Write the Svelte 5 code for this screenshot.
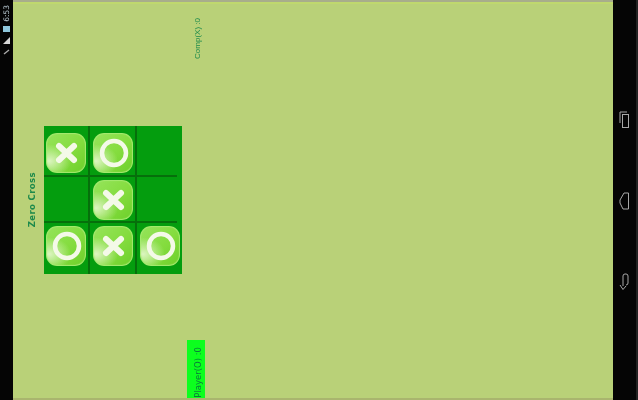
<script>
  const cells = ['x', 'o', '', '', 'x', '', 'o', 'x', 'o'];
</script>

<div class="screen">
  <aside class="status">
    <span class="clock">6:53</span>
    <span class="battery"></span>
    <svg width="9" height="9" viewBox="0 0 9 9"><path d="M1 8 L8 8 L8 1 Z" fill="#d8d8d8" /></svg>
    <svg width="7" height="6" viewBox="0 0 7 6"><path d="M1 5 L6 1" stroke="#aaa" stroke-width="1.5" /></svg>
  </aside>

  <main class="app">
    <div class="title-col"><span class="title">Zero Cross</span></div>
    <div class="board">
      {#each cells as c}
        <div class="cell">
          {#if c}
            <div class="tile">
              <svg viewBox="0 0 40 40" width="40" height="40">
                {#if c === 'x'}
                  <path d="M13 13 L28 27 M28 13 L13 27" stroke="#f4f9e8" stroke-width="6" stroke-linecap="round" fill="none" />
                {:else}
                  <circle cx="21" cy="20" r="12" stroke="#f4f9e8" stroke-width="4.5" fill="none" />
                {/if}
              </svg>
            </div>
          {/if}
        </div>
      {/each}
    </div>
    <div class="score-col">
      <span class="score comp">Comp(X) :0</span>
      <div class="player"><span class="score">Player(O) :0</span></div>
    </div>
  </main>

  <nav class="keys">
    <svg width="11" height="18" viewBox="0 0 11 18" fill="none" stroke="#a8a8a8" stroke-width="1">
      <path d="M1 12 V1 H8" /><rect x="3.5" y="3.5" width="6" height="13" />
    </svg>
    <svg width="11" height="18" viewBox="0 0 11 18" fill="none" stroke="#a8a8a8" stroke-width="1">
      <path d="M9.5 1 H5 L1 8 V11 L4 17 H9.5 Z" />
    </svg>
    <svg width="11" height="18" viewBox="0 0 11 18" fill="none" stroke="#a8a8a8" stroke-width="1">
      <path d="M4 13 V3 Q4 1 6 1 H7 Q9 1 9 3 V10 Q9 12 7 12" /><path d="M1 12 L4 16.5 L7 13" />
    </svg>
  </nav>
</div>

<style>
  :global(body) {
    margin: 0;
    background: #000;
  }
  .screen {
    display: flex;
    width: 638px;
    height: 400px;
    overflow: hidden;
    font-family: "DejaVu Sans", sans-serif;
  }
  .status {
    flex: 0 0 13px;
    background: #050505;
    display: flex;
    flex-direction: column;
    align-items: center;
    gap: 4px;
    padding-top: 5px;
    box-sizing: border-box;
    filter: blur(0.4px);
  }
  .clock {
    writing-mode: vertical-rl;
    transform: rotate(180deg);
    font-size: 7.5px;
    color: #b8c8d0;
    line-height: 8px;
  }
  .battery {
    width: 7px;
    height: 6px;
    background: #8fc7dc;
  }
  .app {
    flex: 1;
    display: flex;
    align-items: center;
    background: #b9d178;
    border-top: 2px solid #a8ad8c;
    box-shadow: inset 0 2px 0 #bfd86e;
    border-bottom: 2px solid #a9b56e;
    box-sizing: border-box;
    height: 400px;
  }
  .title-col {
    width: 31px;
    display: flex;
    justify-content: center;
    padding-left: 6px;
    box-sizing: border-box;
  }
  .title {
    writing-mode: vertical-rl;
    transform: rotate(180deg);
    font-size: 8.5px;
    font-weight: 700;
    letter-spacing: 0.4px;
    color: #1d8a4b;
    white-space: nowrap;
    filter: blur(0.3px);
  }
  .board {
    display: grid;
    grid-template-columns: 46px 47px 40px;
    grid-template-rows: 51px 46px 51px;
    width: 138px;
    height: 148px;
    padding-right: 5px;
    box-sizing: border-box;
    background: #049d0e;
    filter: blur(0.4px);
  }
  .cell {
    box-sizing: border-box;
    display: flex;
    border-right: 2px solid #066f0b;
    border-bottom: 2px solid #066f0b;
  }
  .cell:nth-child(3n) { border-right: 0; }
  .cell:nth-child(n + 7) { border-bottom: 0; }
  .cell:nth-child(-n + 3) .tile { margin-top: 7px; }
  .cell:nth-child(n + 4) .tile { margin-top: 3px; }
  .tile {
    flex: 0 0 40px;
    width: 40px;
    height: 40px;
    margin-left: 2px;
    border-radius: 11px;
    background:
      radial-gradient(ellipse at 8% 70%, #dcf5c0 0%, rgba(220, 245, 192, 0) 42%),
      linear-gradient(135deg, #96e45c 0%, #84dc3e 55%, #6ccf2a 100%);
    box-shadow: inset 0 0 1px 1px #a6ea70;
  }
  .cell:nth-child(3n + 2) .tile,
  .cell:nth-child(3n) .tile { margin-left: 3px; }
  .tile svg { display: block; }
  .score-col {
    align-self: stretch;
    display: flex;
    flex-direction: column;
    justify-content: space-between;
    align-items: center;
    width: 18px;
    margin-left: 5px;
  }
  .score {
    writing-mode: vertical-rl;
    transform: rotate(180deg);
    font-size: 8px;
    color: #1d8a4b;
    white-space: nowrap;
    filter: blur(0.3px);
  }
  .comp {
    margin-top: 16px;
    margin-left: 2px;
    font-family: "Liberation Sans", sans-serif;
  }
  .player {
    width: 18px;
    height: 58px;
    background: #0cff1e;
    display: flex;
    justify-content: center;
    align-items: flex-end;
  }
  .player .score {
    color: #0a7c3a;
    font-size: 8.5px;
    margin-left: 3px;
  }
  .keys {
    flex: 0 0 25px;
    background: #050505;
    box-sizing: border-box;
    border-right: 2px solid #222;
    display: flex;
    flex-direction: column;
    align-items: center;
    gap: 63px;
    padding-top: 111px;
    filter: blur(0.3px);
  }
</style>
